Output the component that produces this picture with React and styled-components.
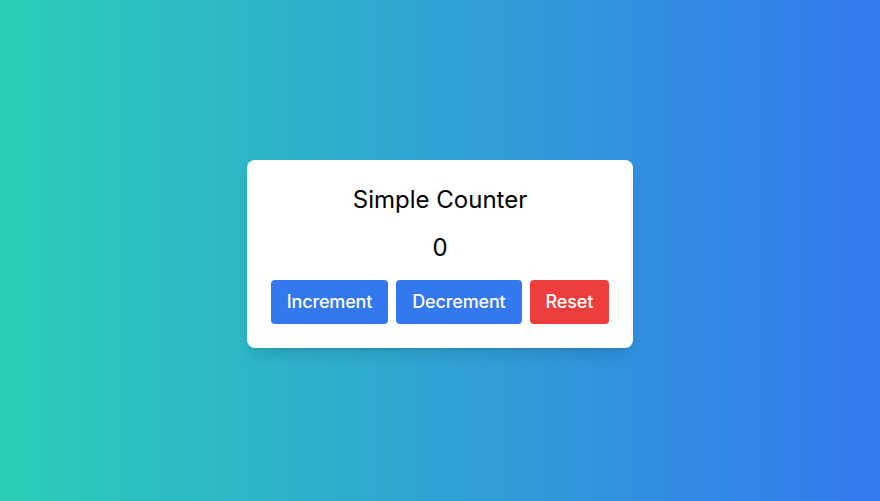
import React, { useState } from 'react';
import styled, { createGlobalStyle } from 'styled-components';

const GlobalStyle = createGlobalStyle`
    html, body {
        margin: 0;
        padding: 0;
        overflow: hidden;
    }
    body {
        font-family: Inter, "Liberation Sans", sans-serif;
    }
`;

const Page = styled.div`
    box-sizing: border-box;
    min-height: 100vh;
    padding-top: 7px;
    display: flex;
    align-items: center;
    justify-content: center;
    background: linear-gradient(to right, #2bceb8, #3478ef);
`;

const Card = styled.div`
    background: #fff;
    border-radius: 8px;
    padding: 24px;
    box-shadow: 0 10px 15px -3px rgba(0, 0, 0, 0.1), 0 4px 6px -4px rgba(0, 0, 0, 0.1);
    display: flex;
    flex-direction: column;
    align-items: center;
`;

const Title = styled.h1`
    margin: 0 0 16px;
    font-size: 24px;
    line-height: 32px;
    font-weight: 400;
    color: #000;
`;

const Count = styled.p`
    margin: 0 0 16px;
    font-size: 24px;
    line-height: 32px;
    color: #000;
`;

const Buttons = styled.div`
    display: flex;
    gap: 8px;
`;

const Button = styled.button`
    font-family: inherit;
    font-size: 18px;
    line-height: 28px;
    font-weight: 500;
    letter-spacing: -0.15px;
    color: #fff;
    background: ${(p) => (p.$danger ? '#ee3d3d' : '#3478ef')};
    border: none;
    border-radius: 4px;
    padding: 8px 16px;
    cursor: pointer;
`;

const App = () => {
    const [count, setCount] = useState(0);

    return (
        <>
            <GlobalStyle />
            <Page>
                <Card>
                    <Title>Simple Counter</Title>
                    <Count>{count}</Count>
                    <Buttons>
                        <Button onClick={() => setCount(count + 1)}>Increment</Button>
                        <Button onClick={() => setCount(count - 1)}>Decrement</Button>
                        <Button $danger onClick={() => setCount(0)}>Reset</Button>
                    </Buttons>
                </Card>
            </Page>
        </>
    );
};

export default App;
